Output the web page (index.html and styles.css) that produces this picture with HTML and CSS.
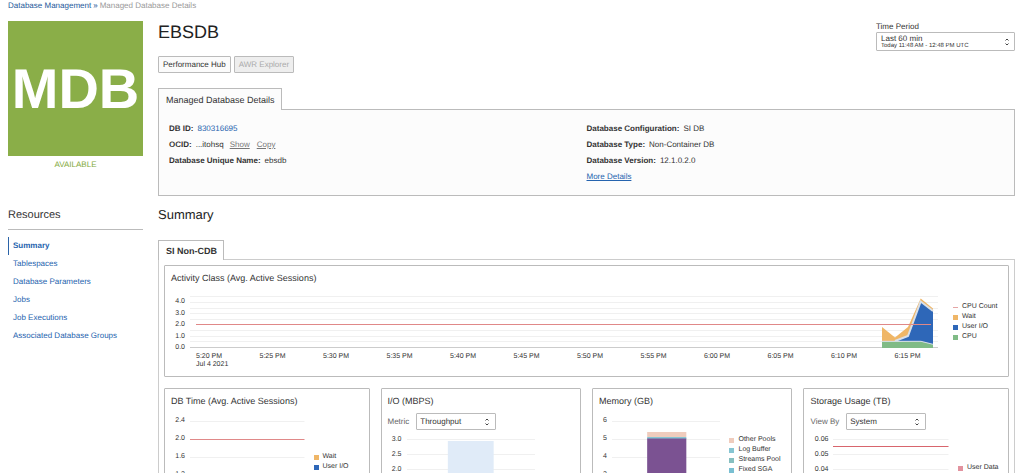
FILE: index.html
```html
<!DOCTYPE html>
<html lang="en">
<head>
<meta charset="utf-8">
<meta name="viewport" content="width=device-width, initial-scale=1">
<title>EBSDB - Managed Database Details</title>
<link rel="stylesheet" href="styles.css">
</head>
<body>
<nav class="breadcrumb" aria-label="Breadcrumb"><a href="#">Database Management</a><span class="crumb-sep">»</span><span>Managed Database Details</span></nav>
<div class="layout">
  <aside class="sidebar">
    <div class="tile">MDB</div>
    <p class="status">AVAILABLE</p>
    <h2 class="side-title">Resources</h2>
    <nav class="side-nav" aria-label="Resources">
      <a class="current" href="#">Summary</a>
      <a href="#">Tablespaces</a>
      <a href="#">Database Parameters</a>
      <a href="#">Jobs</a>
      <a href="#">Job Executions</a>
      <a href="#">Associated Database Groups</a>
    </nav>
  </aside>
  <main class="main">
    <header class="head">
      <div>
        <h1>EBSDB</h1>
        <div class="actions">
          <button class="btn" type="button">Performance Hub</button>
          <button class="btn" type="button" disabled>AWR Explorer</button>
        </div>
      </div>
      <div class="period">
        <label for="period">Time Period</label>
        <button class="period-box" id="period" type="button" aria-haspopup="listbox">
          <span class="period-text"><span class="period-main">Last 60 min</span><span class="period-sub">Today 11:48 AM - 12:48 PM UTC</span></span>
          <svg class="stepper" viewBox="0 0 6 8" aria-hidden="true"><path d="M1.500 2.500 3 1 4.500 2.500M1.500 5.500 3 7 4.500 5.500"/></svg>
        </button>
      </div>
    </header>

    <button class="tab" type="button">Managed Database Details</button>
    <section class="details">
      <dl>
        <div><dt>DB ID:</dt><dd><a class="plain" href="#">830316695</a></dd></div>
        <div><dt>OCID:</dt><dd>...itohsq</dd><dd class="copy"><a href="#">Show</a><a href="#">Copy</a></dd></div>
        <div><dt>Database Unique Name:</dt><dd>ebsdb</dd></div>
      </dl>
      <dl>
        <div><dt>Database Configuration:</dt><dd>SI DB</dd></div>
        <div><dt>Database Type:</dt><dd>Non-Container DB</dd></div>
        <div><dt>Database Version:</dt><dd>12.1.0.2.0</dd></div>
        <div><dd><a class="more" href="#">More Details</a></dd></div>
      </dl>
    </section>

    <h2 class="section-title">Summary</h2>
    <button class="tab tab-strong" type="button">SI Non-CDB</button>
    <section class="panel">
      <article class="card activity">
        <h3>Activity Class (Avg. Active Sessions)</h3>
        <div class="chart chart-wide">
          <div class="axis axis-tight"><span>4.0</span><span>3.0</span><span>2.0</span><span>1.0</span><span>0.0</span></div>
          <div class="plot-col">
            <svg class="plot plot-activity" viewBox="0 0 748 52" preserveAspectRatio="none" aria-hidden="true">
              <path class="grid" d="M0 .5H748M0 6.5H748M0 12.5H748M0 17.5H748M0 23.5H748M0 34.5H748M0 40.5H748M0 45.5H748"/>
              <path class="base" d="M0 51.5H748"/>
              <path class="wait" d="M692 31 705 41.500 718 31 730.700 2.500 743 12.500V18L730.700 7 718 40 705 45H692Z"/>
              <path class="io" d="M705 45 718 40.500 730.700 6 743 15.500V49L731 45.500Z"/>
              <path class="gap" d="M705 45 718 40 730.700 5.500 743 15"/>
              <path class="cpu" d="M692 45.500H731L743 48.500V52H692Z"/>
              <path class="gap thin" d="M692 45.300H731L743 48.300"/>
              <path class="red" d="M6 28.500H741"/>
            </svg>
            <div class="times"><span>5:20 PM<br>Jul 4 2021</span><span>5:25 PM</span><span>5:30 PM</span><span>5:35 PM</span><span>5:40 PM</span><span>5:45 PM</span><span>5:50 PM</span><span>5:55 PM</span><span>6:00 PM</span><span>6:05 PM</span><span>6:10 PM</span><span>6:15 PM</span></div>
          </div>
          <ul class="legend">
            <li><i class="line"></i>CPU Count</li>
            <li><i class="c-wait"></i>Wait</li>
            <li><i class="c-io"></i>User I/O</li>
            <li><i class="c-cpu"></i>CPU</li>
          </ul>
        </div>
      </article>

      <div class="cards">
        <article class="card">
          <h3>DB Time (Avg. Active Sessions)</h3>
          <div class="chart chart-time">
            <div class="axis axis-loose"><span>2.4</span><span>2.0</span><span>1.6</span><span>1.2</span></div>
            <svg class="plot plot-small" viewBox="0 0 116 72" preserveAspectRatio="none" aria-hidden="true">
              <path class="grid" d="M0 9.500H116M0 45.500H116M0 63.500H116"/>
              <path class="red" d="M0 27.500H116"/>
            </svg>
            <ul class="legend">
              <li><i class="c-wait"></i>Wait</li>
              <li><i class="c-io"></i>User I/O</li>
              <li><i class="c-cpu"></i>CPU</li>
            </ul>
          </div>
        </article>

        <article class="card">
          <h3>I/O (MBPS)</h3>
          <div class="field">
            <label for="metric">Metric</label>
            <span class="select"><select id="metric"><option>Throughput</option></select><svg class="stepper" viewBox="0 0 6 8" aria-hidden="true"><path d="M1.500 2.500 3 1 4.500 2.500M1.500 5.500 3 7 4.500 5.500"/></svg></span>
          </div>
          <div class="chart chart-io">
            <div class="axis axis-mid"><span>3.0</span><span>2.5</span><span>2.0</span><span>1.5</span></div>
            <svg class="plot plot-small" viewBox="0 0 129 72" preserveAspectRatio="none" aria-hidden="true">
              <path class="grid" d="M0 7.500H129M0 22.500H129M0 37.500H129M0 52.500H129"/>
              <path class="throughput" d="M41 9H87V72H41Z"/>
            </svg>
          </div>
        </article>

        <article class="card">
          <h3>Memory (GB)</h3>
          <div class="chart chart-memory">
            <div class="axis axis-loose"><span>6</span><span>5</span><span>4</span><span>3</span></div>
            <svg class="plot plot-small" viewBox="0 0 108 72" preserveAspectRatio="none" aria-hidden="true">
              <path class="grid" d="M0 9.500H108M0 27.500H108M0 45.500H108M0 63.500H108"/>
              <path class="pools" d="M35 20H74V25H35Z"/>
              <path class="buffer" d="M35 25H74V27H35Z"/>
              <path class="cache" d="M35 26.500H74V72H35Z"/>
            </svg>
            <ul class="legend">
              <li><i class="c-pools"></i>Other Pools</li>
              <li><i class="c-log"></i>Log Buffer</li>
              <li><i class="c-streams"></i>Streams Pool</li>
              <li><i class="c-sga"></i>Fixed SGA</li>
            </ul>
          </div>
        </article>

        <article class="card">
          <h3>Storage Usage (TB)</h3>
          <div class="field">
            <label for="view">View By</label>
            <span class="select"><select id="view"><option>System</option></select><svg class="stepper" viewBox="0 0 6 8" aria-hidden="true"><path d="M1.500 2.500 3 1 4.500 2.500M1.500 5.500 3 7 4.500 5.500"/></svg></span>
          </div>
          <div class="chart chart-storage">
            <div class="axis axis-mid"><span>0.06</span><span>0.05</span><span>0.04</span><span>0.03</span></div>
            <svg class="plot plot-small" viewBox="0 0 116 72" preserveAspectRatio="none" aria-hidden="true">
              <path class="grid" d="M0 7.500H116M0 22.500H116M0 37.500H116M0 52.500H116"/>
              <path class="red vivid" d="M0 14.500H116"/>
            </svg>
            <ul class="legend">
              <li><i class="c-user"></i>User Data</li>
            </ul>
          </div>
        </article>
      </div>
    </section>
  </main>
</div>
</body>
</html>
```
FILE: styles.css
```css
* {
  box-sizing: border-box;
}

body {
  margin: 0;
  padding: 0 9px 0 8px;
  height: 100vh;
  overflow: hidden;
  background: #fff;
  color: #333;
  font-family: "Liberation Sans", Arial, sans-serif;
  font-size: 8px;
  line-height: 12px;
  text-rendering: geometricPrecision;
}

h1, h2, h3, p, ul, dl, dd {
  margin: 0;
  padding: 0;
  font-weight: normal;
}

a {
  color: #2563ae;
  text-decoration: none;
}

button, select {
  font-family: inherit;
  color: inherit;
  text-rendering: inherit;
}

.breadcrumb {
  display: flex;
  gap: 2px;
  padding-bottom: 9px;
  color: #999;
}

.breadcrumb a {
  color: #24589a;
}

.crumb-sep {
  color: #24589a;
}

.layout {
  display: grid;
  grid-template-columns: 135px minmax(0, 1fr);
  gap: 15px;
}

.tile {
  display: grid;
  place-items: center;
  aspect-ratio: 1;
  background: #8aae48;
  color: #fff;
  font-size: 56px;
  font-weight: bold;
  line-height: 64px;
}

.status {
  padding-top: 3px;
  color: #84aa3c;
  text-align: center;
}

.side-title {
  margin-top: 34px;
  padding-bottom: 4px;
  border-bottom: 1px solid #bbb;
  font-size: 11px;
  line-height: 20px;
}

.side-nav {
  display: flex;
  flex-direction: column;
  margin-top: 7px;
}

.side-nav a {
  padding-left: 4px;
  border-left: 1px solid transparent;
  line-height: 18px;
}

.side-nav .current {
  border-left-color: #2b63a8;
  font-weight: bold;
}

.head {
  display: flex;
  justify-content: space-between;
  margin-bottom: 15px;
}

h1 {
  margin-bottom: 13px;
  color: #222;
  font-size: 18px;
  line-height: 22px;
}

.actions {
  display: flex;
  gap: 3px;
}

.btn {
  height: 17px;
  padding: 0 4px;
  border: 1px solid #bbb;
  border-radius: 1px;
  background: #fbfbfb;
  font-size: 8px;
  line-height: 15px;
}

.btn:disabled {
  background: #eee;
  color: #aaa;
}

.period {
  width: 139px;
}

.period label {
  display: block;
  line-height: 11px;
}

.period-box {
  display: flex;
  align-items: center;
  justify-content: space-between;
  width: 100%;
  height: 19px;
  padding: 0 4px;
  border: 1px solid #bbb;
  border-radius: 1px;
  background: #fff;
  text-align: left;
}

.period-text {
  display: grid;
}

.period-main {
  font-size: 8px;
  line-height: 9px;
}

.period-sub {
  font-size: 6px;
  line-height: 7px;
}

.stepper {
  width: 6px;
  height: 8px;
  fill: none;
  stroke: #444;
  stroke-width: 1;
}

.tab {
  display: block;
  position: relative;
  height: 22px;
  padding: 0 6px 0 7px;
  border: 1px solid #bbb;
  border-bottom: 0;
  background: #fcfcfc;
  font-size: 9px;
  line-height: 20px;
}

.tab-strong {
  height: 20px;
  background: #fff;
  font-weight: bold;
}

.details {
  display: grid;
  grid-template-columns: 1fr 1fr;
  margin-top: -1px;
  padding: 11px 10px 10px;
  border: 1px solid #bbb;
  background: #fcfcfc;
}

.details dl > div {
  display: flex;
  gap: 4px;
  line-height: 16px;
}

.details dt {
  font-weight: bold;
}

.copy {
  display: flex;
  gap: 7px;
  padding-left: 2px;
}

.copy a {
  color: #777;
  text-decoration: underline;
}

.more {
  text-decoration: underline;
}

.section-title {
  margin: 9px 0 15px;
  font-size: 13px;
  line-height: 20px;
  color: #222;
}

.panel {
  margin-top: -1px;
  padding: 5px;
  border: 1px solid #ccc;
}

.card {
  border: 1px solid #bbb;
  border-radius: 1px;
  padding: 6px;
}

.card h3 {
  font-size: 9px;
  line-height: 12px;
}

.chart {
  display: grid;
  font-size: 7px;
  line-height: 10px;
}

.chart-wide {
  grid-template-columns: 14px minmax(0, 1fr) 59px;
  column-gap: 5px;
  margin-top: 12px;
  padding-bottom: 1px;
}

.axis {
  display: flex;
  flex-direction: column;
  text-align: right;
}

.axis-tight {
  justify-content: space-between;
  height: 57px;
  line-height: 11px;
}

.axis-loose {
  line-height: 18px;
}

.axis-mid {
  line-height: 15px;
}

.plot {
  display: block;
  width: 100%;
}

.plot-activity {
  height: 52px;
}

.plot-small {
  height: 72px;
}

.plot path {
  stroke: none;
}

.plot .grid {
  stroke: #f0f0f0;
}

.plot .base {
  stroke: #ccc;
}

.plot .red {
  stroke: #e08888;
}

.plot .vivid {
  stroke: #d8646c;
}

.plot .gap {
  fill: none;
  stroke: #d8dfe8;
  stroke-width: 2;
}

.plot .thin {
  stroke-width: 1;
}

.wait { fill: #efb667; }
.io { fill: #2e67b8; }
.cpu { fill: #80bb86; }
.throughput { fill: #e0ebf8; }
.pools { fill: #efccbd; }
.buffer { fill: #86c5d2; }
.cache { fill: #7b5292; }

.times {
  display: grid;
  grid-template-columns: repeat(12, 1fr);
  margin: 5px -20px 0 6px;
  line-height: 8px;
}

.legend {
  display: flex;
  flex-direction: column;
  list-style: none;
  white-space: nowrap;
}

.legend li {
  display: flex;
  align-items: center;
  gap: 4px;
}

.legend i {
  flex: none;
  width: 5px;
  height: 5px;
}

.legend .line {
  height: 1px;
  background: #e5a5a5;
}

.chart-wide .legend {
  padding: 6px 0 0 10px;
}

.c-wait { background: #efb667; }
.c-io { background: #2e67b8; }
.c-cpu { background: #80bb86; }
.c-pools { background: #efccbd; }
.c-log { background: #86c5d2; }
.c-streams { background: #86bfc0; }
.c-sga { background: #79bfd2; }
.c-user { background: #e2939f; }

.cards {
  display: grid;
  grid-template-columns: 41fr 40fr 40fr 41fr;
  gap: 11px;
  margin-top: 11px;
}

.field {
  display: flex;
  align-items: center;
  gap: 7px;
  color: #666;
}

.select {
  display: grid;
  align-items: center;
  width: 80px;
  color: #333;
}

.select select,
.select .stepper {
  grid-area: 1 / 1;
}

.select select {
  appearance: none;
  width: 100%;
  height: 17px;
  padding: 0 3px;
  border: 1px solid #bbb;
  border-radius: 1px;
  background: #fff;
  font-size: 8px;
}

.select .stepper {
  justify-self: end;
  margin-right: 6px;
  pointer-events: none;
}

.card .field {
  margin-top: 6px;
}

.chart-time,
.chart-memory {
  margin-top: 5px;
}

.chart-time {
  grid-template-columns: 14px minmax(0, 1fr) 53px;
  column-gap: 5px;
}

.chart-io {
  grid-template-columns: 14px minmax(0, 1fr);
  column-gap: 5px;
  margin-top: 2px;
  padding-right: 39px;
}

.chart-memory {
  grid-template-columns: 8px minmax(0, 1fr) 60px;
  column-gap: 5px;
}

.chart-storage {
  grid-template-columns: 18px minmax(0, 1fr) 48px;
  column-gap: 5px;
  margin-top: 2px;
}

.chart-time .legend {
  padding: 40px 0 0 4px;
}

.chart-memory .legend {
  padding: 23px 0 0 4px;
}

.chart-storage .legend {
  padding: 31px 0 0 4px;
}
```
